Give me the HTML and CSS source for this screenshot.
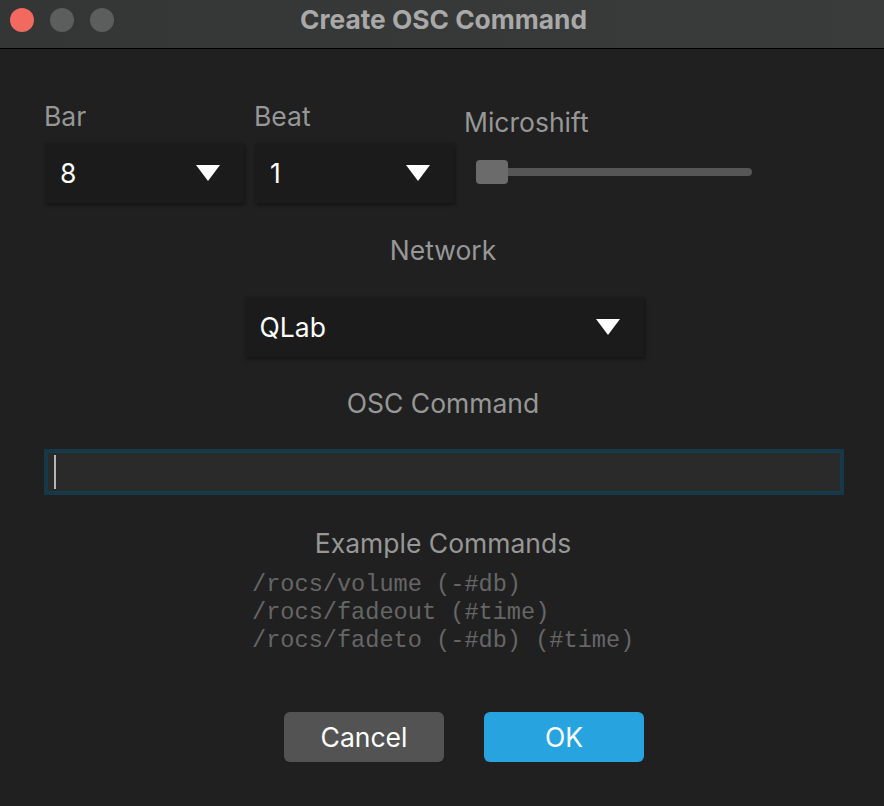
FILE: index.html
```html
<!DOCTYPE html>
<html lang="en">
<head>
    <meta charset="UTF-8">
    <title>Create OSC Command</title>
    <link rel="stylesheet" href="styles.css">
</head>
<body>
    <header class="titlebar">
        <div class="lights">
            <span class="light close"></span>
            <span class="light"></span>
            <span class="light"></span>
        </div>
        <h1>Create OSC Command</h1>
    </header>
    <main class="dialog">
        <div class="timing">
            <div class="field">
                <label>Bar</label>
                <div class="select small"><span>8</span><i class="arrow"></i></div>
            </div>
            <div class="field">
                <label>Beat</label>
                <div class="select small"><span>1</span><i class="arrow"></i></div>
            </div>
            <div class="field micro">
                <label>Microshift</label>
                <div class="slider"><span class="thumb"></span></div>
            </div>
        </div>
        <label class="center network-label">Network</label>
        <div class="select wide"><span>QLab</span><i class="arrow"></i></div>
        <label class="center osc-label">OSC Command</label>
        <div class="command"><span class="caret"></span></div>
        <label class="center example-label">Example Commands</label>
        <pre class="examples">/rocs/volume (-#db)
/rocs/fadeout (#time)
/rocs/fadeto (-#db) (#time)</pre>
        <div class="buttons">
            <button class="btn cancel">Cancel</button>
            <button class="btn ok">OK</button>
        </div>
    </main>
</body>
</html>
```

FILE: styles.css
```css
* {
    box-sizing: border-box;
}
html, body {
    height: 100%;
}
body {
    margin: 0;
    background-color: #202020;
    font-family: Inter, "Liberation Sans", sans-serif;
    overflow: hidden;
}
.titlebar {
    position: relative;
    height: 49px;
    display: flex;
    align-items: center;
    justify-content: center;
    background: linear-gradient(90deg, #343535, #3a3b3b);
    border-bottom: 1px solid #000;
}
.titlebar h1 {
    margin: 0 0 10px 3px;
    font-size: 26.3px;
    font-weight: 700;
    color: #a9a9a9;
}
.lights {
    position: absolute;
    left: 10px;
    top: 8px;
    display: flex;
    gap: 16px;
}
.light {
    width: 24px;
    height: 24px;
    border-radius: 50%;
    background-color: #5c5d5d;
}
.light.close {
    background-color: #f1695f;
}
.dialog {
    display: flex;
    flex-direction: column;
    align-items: center;
    padding: 0 40px 0 44px;
}
label {
    display: block;
    font-size: 26.5px;
    line-height: 30px;
    color: #979797;
}
.center {
    margin-right: 2px;
    text-align: center;
}
.timing {
    align-self: flex-start;
    display: flex;
    gap: 10px;
    margin-top: 52px;
}
.field label {
    margin-bottom: 12px;
}
.field.micro {
    padding-top: 6px;
}
.field.micro label {
    margin-bottom: 0;
}
.select {
    display: flex;
    align-items: center;
    justify-content: space-between;
    height: 60px;
    padding: 0 24px 0 15px;
    background-color: #1b1b1b;
    box-shadow: 1px 2px 4px rgba(0, 0, 0, 0.45);
    font-size: 26.5px;
    color: #fff;
}
.select.small {
    width: 199px;
    margin-left: 1px;
}
.select.wide {
    width: 399px;
    margin-top: 32px;
}
.arrow {
    width: 0;
    height: 0;
    border-left: 12px solid transparent;
    border-right: 12px solid transparent;
    border-top: 16px solid #fff;
}
.slider {
    position: relative;
    width: 276px;
    height: 8px;
    margin: 31px 0 0 12px;
    border-radius: 4px;
    background-color: #565656;
}
.thumb {
    position: absolute;
    left: 0;
    top: -8px;
    width: 32px;
    height: 24px;
    border-radius: 4px;
    background-color: #6b6b6b;
}
.network-label {
    margin-top: 32px;
}
.osc-label {
    margin-top: 31px;
}
.command {
    align-self: stretch;
    height: 46px;
    margin-top: 31px;
    padding: 2px 6px;
    background-color: #2a2a2a;
    border: 4px solid #16394a;
}
.caret {
    display: block;
    width: 2px;
    height: 34px;
    background-color: #b5b5b5;
}
.example-label {
    margin-top: 33px;
}
.examples {
    align-self: flex-start;
    margin: 13px 0 0 208px;
    font-family: "Liberation Mono", monospace;
    font-size: 23.6px;
    line-height: 28px;
    color: #666;
}
.buttons {
    display: flex;
    gap: 40px;
    margin-top: 57px;
    margin-left: 40px;
}
.btn {
    width: 160px;
    height: 50px;
    border: none;
    border-radius: 6px;
    font-family: inherit;
    font-size: 26.5px;
    color: #fff;
}
.cancel {
    background-color: #535353;
}
.ok {
    background-color: #27a4e0;
}
```
